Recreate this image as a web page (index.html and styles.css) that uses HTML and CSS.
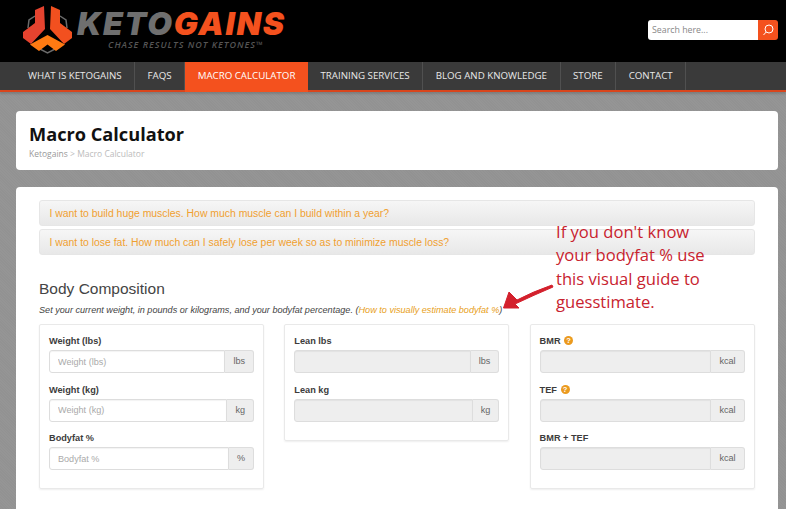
FILE: index.html
```html
<!DOCTYPE html>
<html lang="en">
<head>
<meta charset="utf-8">
<title>Macro Calculator</title>
<link rel="stylesheet" href="styles.css">
</head>
<body>
<header class="top">
  <a class="logo">
    <svg class="mark" width="49" height="49" viewBox="0 0 49 49">
      <g fill="none" stroke="#6b6b6b" stroke-width="1.5">
        <path d="M5 23 6 15 12 11M44 23 43 15 37 11"/>
        <path d="M13 42 24.500 48 36 42"/>
      </g>
      <path fill="#e5432f" d="M12 5 21 1 22 24 8 39 0 33 0 27 12 18Z"/>
      <path fill="#f2501f" d="M37 5 28 1 27 24 41 39 49 33 49 27 37 18Z"/>
      <path fill="#ff7a12" d="M24.500 30 42 39.500 33 46 24.500 39.500 16 46 7 39.500Z"/>
    </svg>
    <div class="wordmark">
      <div class="brand"><span class="keto">KETO</span><span class="gains">GAINS</span></div>
      <div class="tag">CHASE RESULTS NOT KETONES™</div>
    </div>
  </a>
  <form class="search">
    <input class="search-input" type="text" placeholder="Search here...">
    <button class="search-btn" type="button" aria-label="Search">
      <svg width="12" height="12" viewBox="0 0 12 12" fill="none" stroke="#fff" stroke-width="1"><circle cx="7" cy="5" r="4"/><path d="M4.200 8 1.500 11"/></svg>
    </button>
  </form>
</header>
<nav class="nav">
  <a class="nav-item">WHAT IS KETOGAINS</a>
  <a class="nav-item">FAQS</a>
  <a class="nav-item active">MACRO CALCULATOR</a>
  <a class="nav-item">TRAINING SERVICES</a>
  <a class="nav-item">BLOG AND KNOWLEDGE</a>
  <a class="nav-item">STORE</a>
  <a class="nav-item">CONTACT</a>
</nav>
<main class="page">
  <section class="card title-card">
    <h1>Macro Calculator</h1>
    <p class="crumbs"><span class="crumb-link">Ketogains</span> &gt; Macro Calculator</p>
  </section>
  <section class="card calc-card">
    <div class="acc">I want to build huge muscles. How much muscle can I build within a year?</div>
    <div class="acc">I want to lose fat. How much can I safely lose per week so as to minimize muscle loss?</div>
    <h2>Body Composition</h2>
    <p class="note">Set your current weight, in pounds or kilograms, and your bodyfat percentage. (<a class="guide">How to visually estimate bodyfat %</a>)</p>
    <div class="cols">
      <div class="panel">
        <label class="lbl">Weight (lbs)</label>
        <div class="group"><input class="field" placeholder="Weight (lbs)"><span class="addon">lbs</span></div>
        <label class="lbl">Weight (kg)</label>
        <div class="group"><input class="field" placeholder="Weight (kg)"><span class="addon">kg</span></div>
        <label class="lbl">Bodyfat %</label>
        <div class="group"><input class="field" placeholder="Bodyfat %"><span class="addon">%</span></div>
      </div>
      <div class="panel">
        <label class="lbl">Lean lbs</label>
        <div class="group"><input class="field" disabled><span class="addon">lbs</span></div>
        <label class="lbl">Lean kg</label>
        <div class="group"><input class="field" disabled><span class="addon">kg</span></div>
      </div>
      <div class="panel">
        <label class="lbl">BMR <span class="help">?</span></label>
        <div class="group"><input class="field" disabled><span class="addon">kcal</span></div>
        <label class="lbl">TEF <span class="help">?</span></label>
        <div class="group"><input class="field" disabled><span class="addon">kcal</span></div>
        <label class="lbl">BMR + TEF</label>
        <div class="group"><input class="field" disabled><span class="addon">kcal</span></div>
      </div>
    </div>
  </section>
</main>
<div class="callout">If you don't know your bodyfat % use this visual guide to guesstimate.</div>
<svg class="arrow" width="56" height="30" viewBox="0 0 56 30">
  <path fill="#d3202c" stroke="#d3202c" stroke-width="1" stroke-linejoin="round" d="M52 3 Q32 10 17 18 L14 15 L9 10 L3.500 26 L19 26 L15 22 Q34 13 53 5Z"/>
</svg>
</body>
</html>
```
FILE: styles.css
```css
* { box-sizing: border-box; }
html, body { height: 100%; }
body {
  margin: 0;
  height: 509px;
  overflow: hidden;
  position: relative;
  font-family: "Liberation Sans", Arial, sans-serif;
  background: repeating-linear-gradient(45deg, #929292 0, #929292 1px, #959595 1px, #959595 2px);
}
.top {
  height: 62px;
  background: #000;
  display: flex;
  align-items: flex-start;
  justify-content: space-between;
  padding: 5px 8px 0 23px;
}
.logo { display: flex; gap: 5px; }
.mark { flex: none; }
.wordmark { padding-top: 3px; }
.brand {
  font-family: Inter, sans-serif;
  font-weight: 900;
  font-style: italic;
  font-size: 32px;
  line-height: 32px;
  letter-spacing: 1.700px;
}
.keto, .gains { display: inline-block; }
.keto { color: #6f6f6f; }
.gains { color: #f4511e; }
.tag {
  font-family: "Open Sans", sans-serif;
  font-style: italic;
  font-weight: 600;
  font-size: 9px;
  line-height: 10px;
  letter-spacing: 1px;
  color: #555;
  padding-left: 31px;
}
.search { display: flex; margin-top: 15px; height: 20px; }
.search-input {
  width: 110px;
  border: 0;
  border-radius: 3px 0 0 3px;
  background: #fff;
  padding: 0 4px;
  font: 8.800px "Open Sans", sans-serif;
}
.search-input::placeholder { color: #888; opacity: 1; }
.search-btn {
  width: 20px;
  border: 0;
  padding: 0;
  background: #f4511e;
  border-radius: 0 3px 3px 0;
  display: flex;
  align-items: center;
  justify-content: center;
}
.nav {
  height: 30px;
  background: #3a3a3a;
  border-bottom: 2px solid #d9451c;
  display: flex;
  padding-left: 15.500px;
  box-shadow: 0 2px 2px rgba(0,0,0,.15);
}
.nav-item {
  font-family: "Open Sans", sans-serif;
  font-size: 9.720px;
  line-height: 28px;
  color: #e9e9e9;
  padding: 0 12.500px;
  border-right: 1px solid #505050;
  white-space: nowrap;
}
.nav-item.active {
  background: #f4511e;
  color: #fff;
  border-right: 0;
  height: 30px;
}
.page {
  padding: 19px 8px 0 16px;
  display: flex;
  flex-direction: column;
  gap: 17px;
}
.card {
  background: #fff;
  border-radius: 4px;
}
.title-card {
  height: 59px;
  padding: 12px 13px 0;
}
h1 {
  margin: 0;
  font-family: "Open Sans", sans-serif;
  font-weight: 700;
  font-size: 18.200px;
  line-height: 23px;
  color: #111;
}
.crumbs {
  margin: 2px 0 0;
  font-family: "Open Sans", sans-serif;
  font-size: 8.500px;
  line-height: 12px;
  color: #bbb;
}
.crumb-link { color: #999; }
.calc-card {
  height: 340px;
  padding: 13px 23px 0;
}
.acc {
  height: 26px;
  margin-bottom: 3px;
  padding-left: 9.500px;
  line-height: 25px;
  font-size: 10.420px;
  color: #f0a030;
  border: 1px solid #e6e6e6;
  border-radius: 3px;
  background: linear-gradient(#f6f6f6, #e8e8e8);
}
h2 {
  margin: 24px 0 0;
  font-weight: 400;
  font-size: 15.500px;
  line-height: 20px;
  color: #444;
}
.note {
  margin: 6px 0 0;
  font-style: italic;
  font-size: 9.120px;
  line-height: 11px;
  color: #444;
}
.guide { color: #e8a020; }
.cols {
  margin-top: 8px;
  display: grid;
  grid-template-columns: repeat(3, 225px);
  column-gap: 20.300px;
  align-items: start;
}
.panel {
  border: 1px solid #e9e9e9;
  border-radius: 2px;
  box-shadow: 0 1px 2px rgba(0,0,0,.07);
  padding: 10px 9px 18px;
}
.lbl {
  display: block;
  font-weight: 700;
  font-size: 9.200px;
  line-height: 12px;
  color: #3c3c3c;
  margin-bottom: 3px;
}
.group {
  display: flex;
  height: 23px;
  margin-bottom: 10.500px;
}
.panel .group:last-child { margin-bottom: 0; }
.field {
  flex: 1;
  min-width: 0;
  border: 1px solid #ddd;
  border-radius: 3px 0 0 3px;
  padding: 0 8px;
  font: 9.100px "Liberation Sans", Arial, sans-serif;
  background: #fff;
  box-shadow: inset 0 1px 1px rgba(0,0,0,.05);
}
.field::placeholder { color: #aaa; opacity: 1; }
.field:disabled { background: #eee; }
.addon {
  flex: none;
  padding: 0 8px;
  font-size: 9.100px;
  line-height: 21px;
  color: #666;
  background: #eee;
  border: 1px solid #ddd;
  border-left: 0;
  border-radius: 0 3px 3px 0;
}
.help {
  display: inline-block;
  width: 9px;
  height: 9px;
  border-radius: 50%;
  background: #eb9a1e;
  color: #fff;
  font-size: 7.500px;
  line-height: 9px;
  text-align: center;
  vertical-align: 1px;
  margin-left: 1px;
}
.callout {
  position: absolute;
  left: 556px;
  top: 220px;
  width: 170px;
  font-family: "Open Sans", sans-serif;
  font-size: 16.600px;
  line-height: 23.400px;
  color: #c8232f;
}
.arrow {
  position: absolute;
  left: 500px;
  top: 282px;
}
```
